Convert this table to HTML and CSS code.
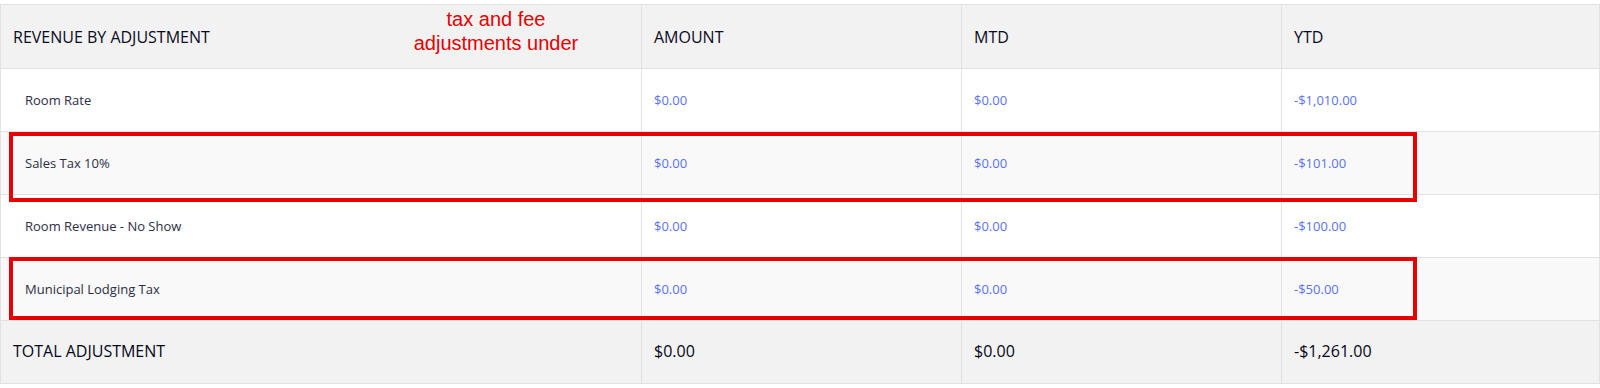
FILE: index.html
```html
<!DOCTYPE html>
<html>
<head>
<meta charset="utf-8">
<link rel="stylesheet" href="styles.css">
</head>
<body>
<div class="report">
  <table class="grid">
    <colgroup>
      <col class="c-name">
      <col class="c-num">
      <col class="c-num">
      <col>
    </colgroup>
    <thead>
      <tr class="head">
        <th>REVENUE BY ADJUSTMENT</th>
        <th>AMOUNT</th>
        <th>MTD</th>
        <th>YTD</th>
      </tr>
    </thead>
    <tbody>
      <tr class="row">
        <td class="label">Room Rate</td>
        <td class="val">$0.00</td>
        <td class="val">$0.00</td>
        <td class="val">-$1,010.00</td>
      </tr>
      <tr class="row alt">
        <td class="label">Sales Tax 10%</td>
        <td class="val">$0.00</td>
        <td class="val">$0.00</td>
        <td class="val">-$101.00</td>
      </tr>
      <tr class="row">
        <td class="label">Room Revenue - No Show</td>
        <td class="val">$0.00</td>
        <td class="val">$0.00</td>
        <td class="val">-$100.00</td>
      </tr>
      <tr class="row alt">
        <td class="label">Municipal Lodging Tax</td>
        <td class="val">$0.00</td>
        <td class="val">$0.00</td>
        <td class="val">-$50.00</td>
      </tr>
    </tbody>
    <tfoot>
      <tr class="total">
        <td>TOTAL ADJUSTMENT</td>
        <td>$0.00</td>
        <td>$0.00</td>
        <td>-$1,261.00</td>
      </tr>
    </tfoot>
  </table>
  <div class="note">tax and fee<br>adjustments under</div>
  <div class="mark mark-1"></div>
  <div class="mark mark-2"></div>
</div>
</body>
</html>
```

FILE: styles.css
```css
html, body {
  margin: 0;
  padding: 0;
  background: #ffffff;
}

body {
  padding-top: 4px;
  font-family: "Open Sans", "Noto Sans", sans-serif;
}

.report {
  position: relative;
  width: 1600px;
}

.grid {
  width: 1600px;
  border-collapse: collapse;
  table-layout: fixed;
}

.c-name { width: 641px; }
.c-num { width: 320px; }

.grid th,
.grid td {
  border: 1px solid #e2e2e2;
  padding: 0 12px;
  text-align: left;
  vertical-align: middle;
  white-space: nowrap;
}

.head th {
  height: 63px;
  background: #f2f2f2;
  font-size: 16px;
  font-weight: 400;
  color: #0a0a24;
  letter-spacing: 0;
}

.row td {
  height: 62px;
  background: #ffffff;
  font-size: 13px;
}

.row.alt td {
  background: #f9f9f9;
}

.row .label {
  padding-left: 24px;
  color: #2c2c46;
}

.row .val {
  color: #5a72f2;
}

.total td {
  height: 60px;
  padding-bottom: 2px;
  background: #f2f2f2;
  font-size: 16px;
  color: #05051a;
  letter-spacing: 0;
}

.note {
  position: absolute;
  left: 396px;
  top: 3px;
  width: 200px;
  text-align: center;
  font-family: "Liberation Sans", Arial, sans-serif;
  font-size: 20px;
  line-height: 24px;
  color: #e60000;
}

.mark {
  position: absolute;
  left: 9px;
  width: 1400px;
  border: 4px solid #e60000;
}

.mark-1 {
  top: 128px;
  height: 62px;
}

.mark-2 {
  top: 253px;
  height: 55px;
}
```
